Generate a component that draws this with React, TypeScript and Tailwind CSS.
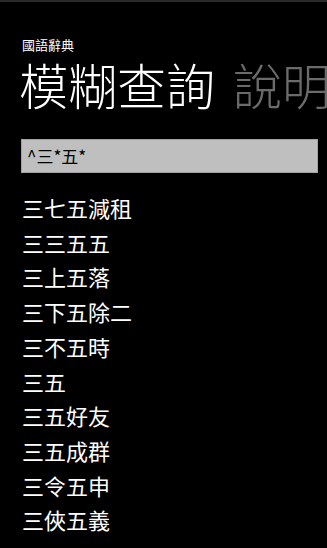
import React from 'react';

const results = [
  '三七五減租',
  '三三五五',
  '三上五落',
  '三下五除二',
  '三不五時',
  '三五',
  '三五好友',
  '三五成群',
  '三令五申',
  '三俠五義',
];

export default function App() {
  return (
    <div
      className="w-[327px] h-[548px] overflow-hidden bg-black text-white"
      style={{ fontFamily: '"Noto Sans CJK TC", "Noto Sans", sans-serif' }}
    >
      <div className="h-[2px] bg-[#2a2a2a]" />

      {/* Header */}
      <div className="pl-[22px] pt-[36px] text-[13px] leading-[14px]">國語辭典</div>
      <div className="flex whitespace-nowrap pl-[19px] pt-[7px] text-[49px] leading-[49px] font-light">
        <span>模糊查詢</span>
        <span className="ml-[18px] text-[#6b6b6b]">說明</span>
      </div>

      {/* Search box */}
      <div className="mx-[21px] mt-[31px] w-[297px] h-[34px] flex items-center px-[5px] bg-[#bfbfbf] border border-[#a4a4a4] text-black text-[17px]">
        ^三*五*
      </div>

      {/* Results */}
      <ul className="mt-[17px] pl-[22px]">
        {results.map((r) => (
          <li key={r} className="text-[22px] leading-[34.7px]">
            {r}
          </li>
        ))}
      </ul>
    </div>
  );
}
